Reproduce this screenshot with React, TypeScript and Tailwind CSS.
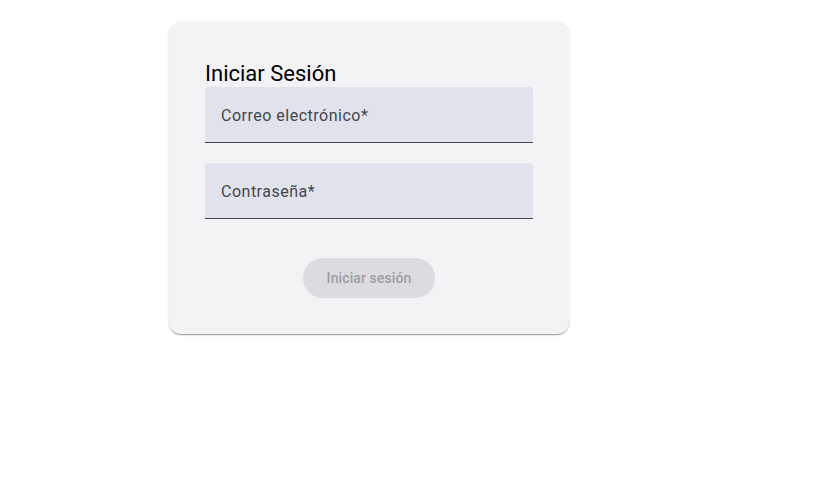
function Field({ label }: { label: string }) {
  return (
    <div className="flex h-14 items-center rounded-t-[4px] border-b border-[#44474e] bg-[#e0e2ec] px-4 pt-[2px]">
      <span className="text-base tracking-[0.5px] text-[#44474e]">{label}</span>
    </div>
  );
}

export default function App() {
  return (
    <div className="min-h-[487px] w-full bg-white font-['Roboto',sans-serif]">
      <div className="pl-[169px] pt-[22px]">
        <div className="w-[400px] rounded-xl bg-[#f3f3f6] px-9 pb-9 pt-[38px] shadow-[0_2px_1px_-1px_rgba(0,0,0,0.2),0_1px_1px_0_rgba(0,0,0,0.14),0_1px_3px_0_rgba(0,0,0,0.12)]">
          <h1 className="text-[22px] leading-[27px] text-black">Iniciar Sesión</h1>
          <div className="flex flex-col gap-5">
            <Field label="Correo electrónico*" />
            <Field label="Contraseña*" />
          </div>
          <div className="mt-[39px] flex justify-center">
            <button className="h-10 w-[132px] rounded-full bg-[#dcdbdf] text-sm font-medium tracking-[0.1px] text-[#9e9ea2]">
              Iniciar sesión
            </button>
          </div>
        </div>
      </div>
    </div>
  );
}
